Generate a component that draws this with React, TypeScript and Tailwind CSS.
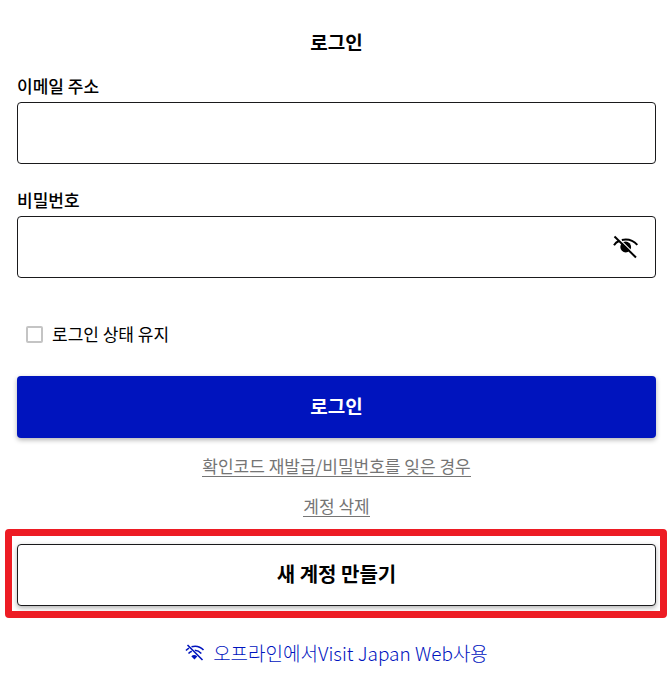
import { useState } from "react";

function EyeOffIcon() {
  return (
    <svg width="26" height="24" viewBox="0 0 26 24" fill="none" aria-hidden="true">
      <path d="M1 10.200C2.200 8.300 3.800 6.900 6 6M8.800 4.900C15 3.600 20.500 5.600 24.300 9.800" stroke="#000" strokeWidth="2" />
      <circle cx="12.700" cy="12" r="5.400" fill="#000" />
      <path d="M4 1.800L24.500 22" stroke="#fff" strokeWidth="1.200" />
      <path d="M1.500 1.500L23 22.500" stroke="#000" strokeWidth="2" />
    </svg>
  );
}

function WifiOffIcon() {
  return (
    <svg width="20" height="18" viewBox="0 0 20 18" fill="none" aria-hidden="true">
      <g stroke="#0014be" strokeWidth="1.600">
        <path d="M1 6.500C1.900 5.500 2.800 4.800 4 4.100M6.500 2.700C11 1.500 15.500 2.800 18.500 6" />
        <path d="M3.500 9.500C4.500 8.500 5.500 7.800 6.800 7.300M9.800 6.300C12.300 6.400 14.500 7.500 16.300 9.500" />
        <path d="M2.500 1L17.500 16" />
      </g>
      <path d="M6.300 12.300Q9.200 9.800 12.300 12.500L9.400 15.500Z" fill="#0014be" />
    </svg>
  );
}

const field = "block h-[62px] w-full rounded border border-[#1a1a1c] bg-white px-4 text-[17px] outline-none";
const label = "mb-1 block text-[17px] leading-6 font-medium";
const link = "border-b border-[#757575] text-[17px] leading-5 text-[#757575]";
const action = "block h-[62px] w-full rounded pb-[2px] font-bold shadow-[0_2px_5px_rgba(0,0,0,0.3)]";

export default function App() {
  const [visible, setVisible] = useState(false);
  return (
    <main className="bg-white pt-7 pr-[14px] pb-6 pl-[17px] font-['Noto_Sans_CJK_KR',sans-serif] text-black">
      <form onSubmit={(e) => e.preventDefault()}>
        <h1 className="mb-[18px] text-center text-[19px] leading-7 font-bold">로그인</h1>
        <label htmlFor="email" className={label}>이메일 주소</label>
        <input id="email" type="email" className={field} />
        <label htmlFor="password" className={`mt-6 ${label}`}>비밀번호</label>
        <div className="relative">
          <input id="password" type={visible ? "text" : "password"} className={field} />
          <button
            type="button"
            aria-label="비밀번호 표시"
            onClick={() => setVisible(!visible)}
            className="absolute inset-y-0 right-[17px] flex items-center"
          >
            <EyeOffIcon />
          </button>
        </div>
        <label className="mt-[44px] ml-[9px] flex items-center gap-[9px] text-[17px] leading-6">
          <input type="checkbox" className="size-[17px] appearance-none rounded-xs border-2 border-[#c4c4c4] bg-white checked:bg-[#0014be]" />
          로그인 상태 유지
        </label>
        <button type="submit" className={`mt-[30px] bg-[#0014be] text-[19px] text-white ${action}`}>로그인</button>
      </form>
      <nav className="mt-[18px] flex flex-col items-center gap-[19px]">
        <a href="#reset" className={link}>확인코드 재발급/비밀번호를 잊은 경우</a>
        <a href="#delete" className={link}>계정 삭제</a>
      </nav>
      <div className="relative mt-[27px]">
        <button type="button" className={`border border-[#1a1a1c] bg-white text-[20px] ${action}`}>새 계정 만들기</button>
        <div className="pointer-events-none absolute -top-[15px] -right-[11px] -bottom-3 -left-3 rounded-sm border-[7px] border-[#ed1c24]" />
      </div>
      <a href="#offline" className="mt-[33px] flex items-center justify-center gap-2 text-[19px] leading-7 font-light text-[#0014be]">
        <WifiOffIcon />
        오프라인에서Visit Japan Web사용
      </a>
    </main>
  );
}
